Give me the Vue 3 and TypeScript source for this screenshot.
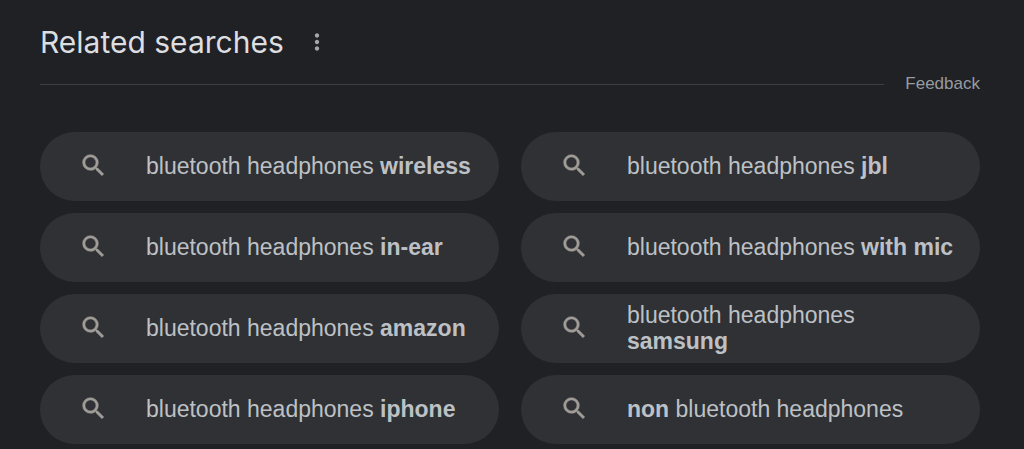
<script setup lang="ts">
interface Part {
  text: string
  bold: boolean
}

const searches: Part[][] = [
  [{ text: 'bluetooth headphones ', bold: false }, { text: 'wireless', bold: true }],
  [{ text: 'bluetooth headphones ', bold: false }, { text: 'jbl', bold: true }],
  [{ text: 'bluetooth headphones ', bold: false }, { text: 'in-ear', bold: true }],
  [{ text: 'bluetooth headphones ', bold: false }, { text: 'with mic', bold: true }],
  [{ text: 'bluetooth headphones ', bold: false }, { text: 'amazon', bold: true }],
  [{ text: 'bluetooth headphones ', bold: false }, { text: 'samsung', bold: true }],
  [{ text: 'bluetooth headphones ', bold: false }, { text: 'iphone', bold: true }],
  [{ text: 'non', bold: true }, { text: ' bluetooth headphones', bold: false }],
]
</script>

<template>
  <section class="related" aria-labelledby="related-title">
    <header class="heading">
      <h2 id="related-title">Related searches</h2>
      <button class="more" type="button" aria-label="About this result">
        <svg viewBox="0 0 24 24" aria-hidden="true">
          <path d="M12 8c1.1 0 2-.9 2-2s-.9-2-2-2-2 .9-2 2 .9 2 2 2zm0 2c-1.1 0-2 .9-2 2s.9 2 2 2 2-.9 2-2-.9-2-2-2zm0 6c-1.1 0-2 .9-2 2s.9 2 2 2 2-.9 2-2-.9-2-2-2z" />
        </svg>
      </button>
    </header>
    <div class="divider">
      <span class="rule"></span>
      <a class="feedback" href="#">Feedback</a>
    </div>
    <nav class="grid" aria-label="Related searches">
      <a v-for="(parts, i) in searches" :key="i" class="pill" href="#">
        <svg class="glass" viewBox="0 0 24 24" aria-hidden="true">
          <path d="M15.5 14h-.79l-.28-.27A6.471 6.471 0 0 0 16 9.5 6.5 6.5 0 1 0 9.5 16c1.61 0 3.09-.59 4.23-1.57l.27.28v.79l5 4.99L20.49 19l-4.99-5zm-6 0C7.01 14 5 11.99 5 9.5S7.01 5 9.5 5 14 7.01 14 9.5 11.99 14 9.5 14z" />
        </svg>
        <span class="label"><template v-for="(part, j) in parts" :key="j"><b v-if="part.bold">{{ part.text }}</b><template v-else>{{ part.text }}</template></template></span>
      </a>
    </nav>
  </section>
</template>

<style>
body {
  background: #202124;
}
</style>

<style scoped>
.related {
  padding: 22px 44px 6px 40px;
  font-family: "Liberation Sans", Arial, sans-serif;
  color: #bdc1c6;
}

.heading {
  display: flex;
  align-items: center;
  gap: 20px;
  height: 40px;
}

h2 {
  margin: 0;
  font-family: "Google Sans", Inter, sans-serif;
  font-size: 30px;
  font-weight: 400;
  line-height: 40px;
  color: #dcdee1;
}

.more {
  display: flex;
  padding: 0;
  border: 0;
  background: none;
  cursor: pointer;
}

.more svg {
  width: 26px;
  height: 26px;
  fill: #a5a6a8;
}

.divider {
  display: flex;
  align-items: center;
  gap: 21px;
  margin-top: 12px;
}

.rule {
  flex: 1;
  height: 1px;
  background: #3c4043;
}

.feedback {
  font-size: 17px;
  line-height: 20px;
  color: #969ba1;
  text-decoration: none;
}

.grid {
  display: grid;
  grid-template-columns: 1fr 1fr;
  gap: 12px 22px;
  margin-top: 38px;
}

.pill {
  display: flex;
  align-items: center;
  box-sizing: border-box;
  min-height: 69px;
  padding: 5px 24px 7px 39px;
  border-radius: 35px;
  background: #303134;
  color: #bdc1c6;
  font-size: 23px;
  line-height: 26px;
  text-decoration: none;
}

.glass {
  flex: none;
  width: 29px;
  height: 29px;
  margin-right: 38px;
  fill: #a09d99;
  stroke: #a09d99;
  stroke-width: 0.4;
}
</style>
